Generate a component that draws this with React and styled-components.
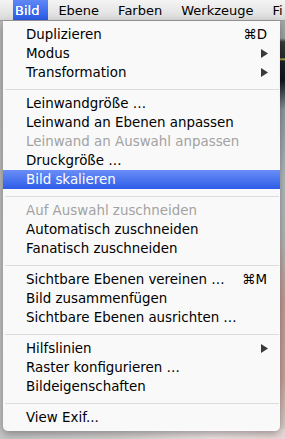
import React from "react";
import styled, { createGlobalStyle } from "styled-components";

const GlobalStyle = createGlobalStyle`
  html, body { margin: 0; padding: 0; }
  body { width: 285px; height: 439px; overflow: hidden; background: #c4c4c4; }
  * { box-sizing: border-box; }
`;

const Screen = styled.div`
  position: relative;
  width: 285px;
  height: 439px;
  overflow: hidden;
  font-family: "DejaVu Sans", "Liberation Sans", sans-serif;
  font-size: 13.4px;
  background:
    linear-gradient(to right, #c6c6c6 0, #d4d0d0 40%, #eee4e4 75%, #e8d8d6 100%) left bottom / 100% 10px no-repeat,
    linear-gradient(to bottom, #a8a8a8 0, #a4a4a4 38px, #3a3a3a 42px, #2a2a2a 58px, #d8c850 59px, #1c2026 61px, #12161c 80px, #8e989e 110px, #b4babc 180px, #b6b4b4 240px, #c29a94 300px, #c8a49c 380px, #d8c4c0 420px, #e6dcda 439px) right top / 6px 100% no-repeat,
    linear-gradient(to bottom, #b8b8b8, #c4c4c4);
  display: flex;
  flex-direction: column;
`;

const MenuBar = styled.div`
  height: 21px;
  flex: none;
  display: flex;
  align-items: stretch;
  padding-left: 13px;
  background: linear-gradient(to bottom, #f4f4f4 0%, #e8e8e8 50%, #dadada 100%);
  border-bottom: 1px solid #9c9c9c;
  white-space: nowrap;
`;

const BarItem = styled.div`
  display: flex;
  align-items: center;
  padding: ${(p) => (p.$active ? "1px 9px 0 2px" : "1px 9px 0 10px")};
  color: ${(p) => (p.$active ? "#ffffff" : "#000000")};
  font-size: 13px;
  text-shadow: ${(p) => (p.$active ? "0 0 0.4px #ffffff" : "none")};
  background: ${(p) =>
    p.$active ? "linear-gradient(to bottom, #5f87f5 0%, #4370ef 50%, #2c5ae6 100%)" : "transparent"};
`;

const Dropdown = styled.div`
  margin-left: 3px;
  width: 277px;
  padding: 4px 0 4px;
  background: rgba(252, 252, 252, 0.95);
  border-radius: 0 0 5px 5px;
  box-shadow: 0 3px 8px rgba(0, 0, 0, 0.35);
  display: flex;
  flex-direction: column;
`;

const Item = styled.div`
  height: 19px;
  line-height: 19px;
  padding: 0 13px 0 23px;
  display: flex;
  align-items: center;
  justify-content: space-between;
  white-space: nowrap;
  color: ${(p) => (p.$disabled ? "#a2a2a2" : p.$selected ? "#ffffff" : "#000000")};
  background: ${(p) =>
    p.$selected ? "linear-gradient(to bottom, #6a8ef6 0%, #4c76ef 50%, #2d5ce8 100%)" : "transparent"};
`;

const Label = styled.span``;

const Shortcut = styled.span`
  color: #000000;
`;

const Arrow = styled.svg`
  width: 7px;
  height: 9px;
  flex: none;
  margin-right: -1px;
`;

const Separator = styled.div`
  height: 1px;
  margin: 7px 1px 4px 2px;
  background: #dcdcdc;
`;

const SubArrow = () => (
  <Arrow viewBox="0 0 7 9">
    <polygon points="0,0 7,4.5 0,9" fill="#3a3a3a" />
  </Arrow>
);

const groups = [
  [
    { label: "Duplizieren", shortcut: "⌘D" },
    { label: "Modus", sub: true },
    { label: "Transformation", sub: true },
  ],
  [
    { label: "Leinwandgröße …" },
    { label: "Leinwand an Ebenen anpassen" },
    { label: "Leinwand an Auswahl anpassen", disabled: true },
    { label: "Druckgröße …" },
    { label: "Bild skalieren", selected: true },
  ],
  [
    { label: "Auf Auswahl zuschneiden", disabled: true },
    { label: "Automatisch zuschneiden" },
    { label: "Fanatisch zuschneiden" },
  ],
  [
    { label: "Sichtbare Ebenen vereinen …", shortcut: "⌘M" },
    { label: "Bild zusammenfügen" },
    { label: "Sichtbare Ebenen ausrichten …" },
  ],
  [
    { label: "Hilfslinien", sub: true },
    { label: "Raster konfigurieren …" },
    { label: "Bildeigenschaften" },
  ],
  [{ label: "View Exif..." }],
];

export default function App() {
  return (
    <>
      <GlobalStyle />
      <Screen>
        <MenuBar>
          <BarItem $active>Bild</BarItem>
          <BarItem>Ebene</BarItem>
          <BarItem>Farben</BarItem>
          <BarItem>Werkzeuge</BarItem>
          <BarItem>Fi</BarItem>
        </MenuBar>
        <Dropdown>
          {groups.map((g, gi) => (
            <React.Fragment key={gi}>
              {gi > 0 && <Separator />}
              {g.map((it) => (
                <Item key={it.label} $disabled={it.disabled} $selected={it.selected}>
                  <Label>{it.label}</Label>
                  {it.shortcut && <Shortcut>{it.shortcut}</Shortcut>}
                  {it.sub && <SubArrow />}
                </Item>
              ))}
            </React.Fragment>
          ))}
        </Dropdown>
      </Screen>
    </>
  );
}
